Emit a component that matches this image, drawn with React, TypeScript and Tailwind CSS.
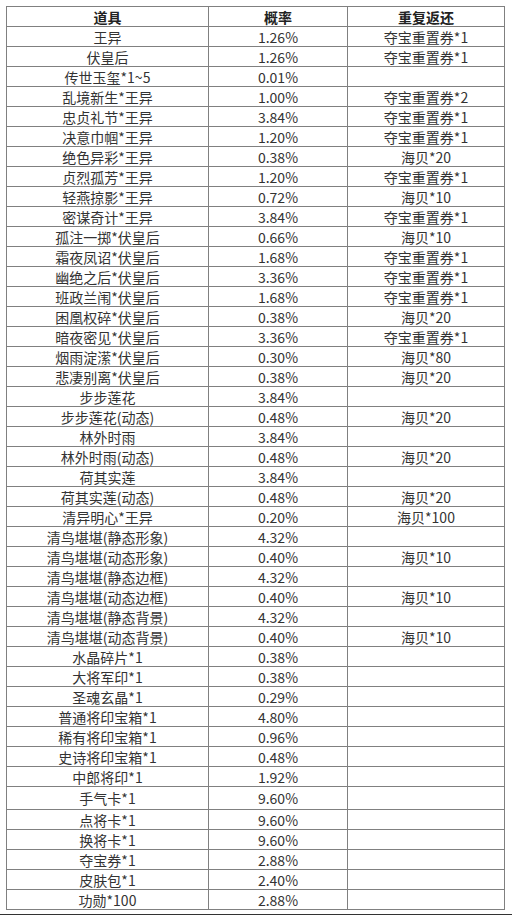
import React from 'react';

// [item, rate, refund]
const rows: [string, string, string][] = [
  ['王异', '1.26%', '夺宝重置券*1'],
  ['伏皇后', '1.26%', '夺宝重置券*1'],
  ['传世玉玺*1~5', '0.01%', ''],
  ['乱境新生*王异', '1.00%', '夺宝重置券*2'],
  ['忠贞礼节*王异', '3.84%', '夺宝重置券*1'],
  ['决意巾帼*王异', '1.20%', '夺宝重置券*1'],
  ['绝色异彩*王异', '0.38%', '海贝*20'],
  ['贞烈孤芳*王异', '1.20%', '夺宝重置券*1'],
  ['轻燕掠影*王异', '0.72%', '海贝*10'],
  ['密谋奇计*王异', '3.84%', '夺宝重置券*1'],
  ['孤注一掷*伏皇后', '0.66%', '海贝*10'],
  ['霜夜凤诏*伏皇后', '1.68%', '夺宝重置券*1'],
  ['幽绝之后*伏皇后', '3.36%', '夺宝重置券*1'],
  ['班政兰闱*伏皇后', '1.68%', '夺宝重置券*1'],
  ['困凰权碎*伏皇后', '0.38%', '海贝*20'],
  ['暗夜密见*伏皇后', '3.36%', '夺宝重置券*1'],
  ['烟雨淀潆*伏皇后', '0.30%', '海贝*80'],
  ['悲凄别离*伏皇后', '0.38%', '海贝*20'],
  ['步步莲花', '3.84%', ''],
  ['步步莲花(动态)', '0.48%', '海贝*20'],
  ['林外时雨', '3.84%', ''],
  ['林外时雨(动态)', '0.48%', '海贝*20'],
  ['荷其实莲', '3.84%', ''],
  ['荷其实莲(动态)', '0.48%', '海贝*20'],
  ['清异明心*王异', '0.20%', '海贝*100'],
  ['清鸟堪堪(静态形象)', '4.32%', ''],
  ['清鸟堪堪(动态形象)', '0.40%', '海贝*10'],
  ['清鸟堪堪(静态边框)', '4.32%', ''],
  ['清鸟堪堪(动态边框)', '0.40%', '海贝*10'],
  ['清鸟堪堪(静态背景)', '4.32%', ''],
  ['清鸟堪堪(动态背景)', '0.40%', '海贝*10'],
  ['水晶碎片*1', '0.38%', ''],
  ['大将军印*1', '0.38%', ''],
  ['圣魂玄晶*1', '0.29%', ''],
  ['普通将印宝箱*1', '4.80%', ''],
  ['稀有将印宝箱*1', '0.96%', ''],
  ['史诗将印宝箱*1', '0.48%', ''],
  ['中郎将印*1', '1.92%', ''],
  ['手气卡*1', '9.60%', ''],
  ['点将卡*1', '9.60%', ''],
  ['换将卡*1', '9.60%', ''],
  ['夺宝券*1', '2.88%', ''],
  ['皮肤包*1', '2.40%', ''],
  ['功勋*100', '2.88%', ''],
];

const cell = 'border border-[#808080] p-0 text-center leading-none';

export default function App() {
  return (
    <div className="w-[512px] h-[915px] bg-white pt-[6px] pl-[6px] font-['Noto_Sans_CJK_SC','Microsoft_YaHei',sans-serif] text-[14px] text-[#333]">
      <table className="border-collapse table-fixed w-[498px]">
        <colgroup>
          <col className="w-[202px]" />
          <col className="w-[139px]" />
          <col className="w-[157px]" />
        </colgroup>
        <thead>
          <tr className="h-[20px]">
            <th className={`${cell} font-bold text-[#222]`}>道具</th>
            <th className={`${cell} font-bold text-[#222]`}>概率</th>
            <th className={`${cell} font-bold text-[#222]`}>重复返还</th>
          </tr>
        </thead>
        <tbody>
          {rows.map(([item, rate, refund]) => (
            <tr key={item} className={item === '手气卡*1' ? 'h-[23px]' : 'h-[20px]'}>
              <td className={cell}>{item}</td>
              <td className={cell}>{rate}</td>
              <td className={cell}>{refund}</td>
            </tr>
          ))}
        </tbody>
      </table>
      <div className="mt-[4px] -ml-[6px] h-[2px] w-[512px] bg-[#333]" />
    </div>
  );
}
